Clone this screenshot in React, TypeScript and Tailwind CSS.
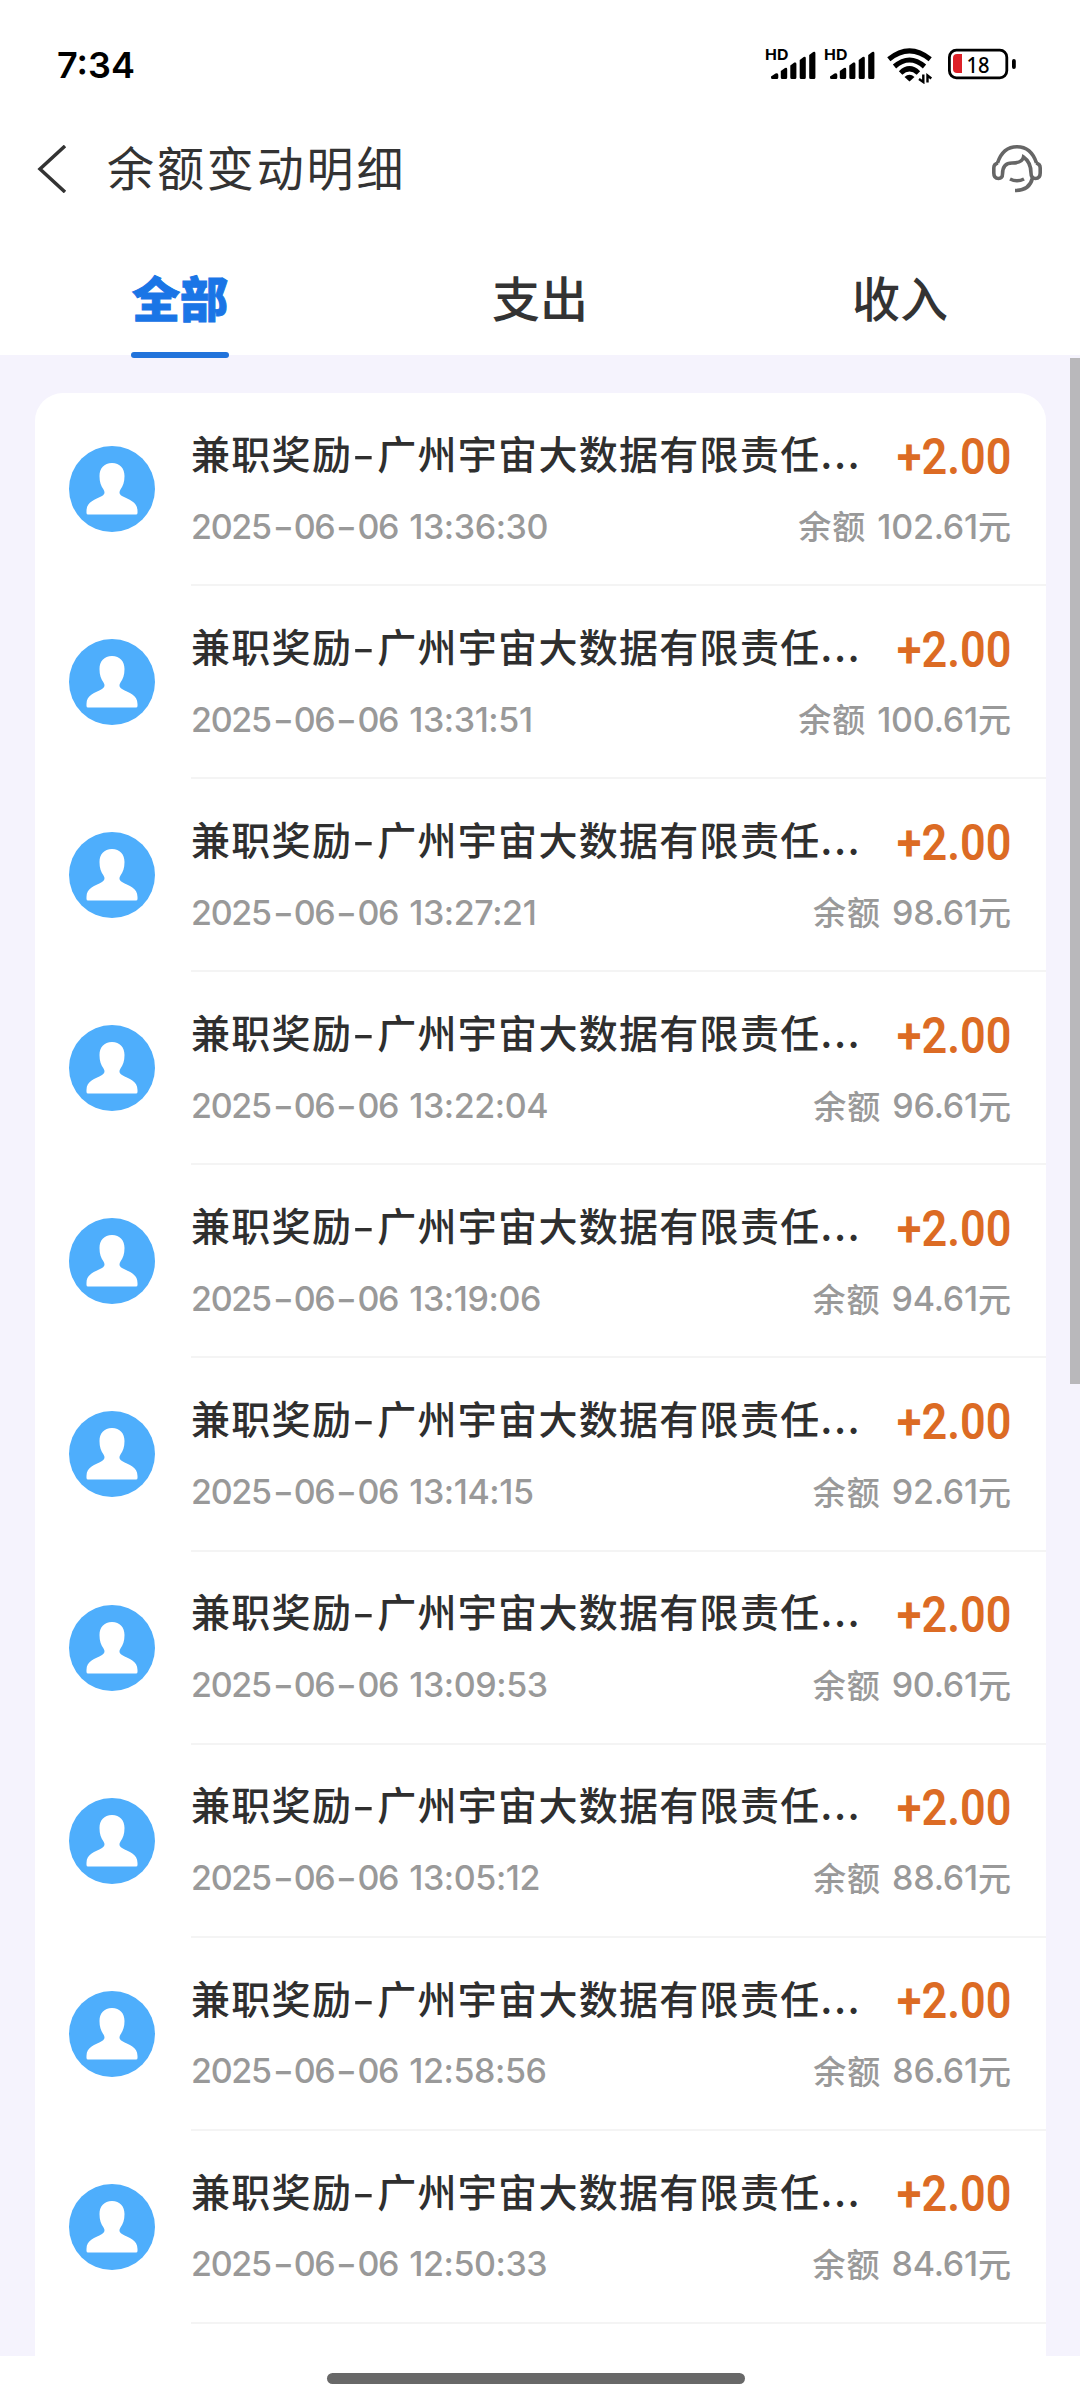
const records = [
  { time: "2025-06-06 13:36:30", balance: "102.61" },
  { time: "2025-06-06 13:31:51", balance: "100.61" },
  { time: "2025-06-06 13:27:21", balance: "98.61" },
  { time: "2025-06-06 13:22:04", balance: "96.61" },
  { time: "2025-06-06 13:19:06", balance: "94.61" },
  { time: "2025-06-06 13:14:15", balance: "92.61" },
  { time: "2025-06-06 13:09:53", balance: "90.61" },
  { time: "2025-06-06 13:05:12", balance: "88.61" },
  { time: "2025-06-06 12:58:56", balance: "86.61" },
  { time: "2025-06-06 12:50:33", balance: "84.61" },
];

const tabs = ["全部", "支出", "收入"];

function Signal() {
  return (
    <div className="relative h-8 w-[50px]">
      <span className="absolute -left-px -top-0.5 origin-left scale-x-[1.06] font-['Inter'] text-[15px] font-bold leading-[18px] text-black">
        HD
      </span>
      <svg className="h-8 w-[50px]" viewBox="0 0 50 32">
        <path d="M5 29.5 V28.5 L9.5 25.5 Q12.3 24.5 12.3 27 V29.5 a1.5 1.5 0 0 1-1.5 1.5 H6.5 A1.5 1.5 0 0 1 5 29.5Z" />
        <path d="M14.8 23 L19 20 Q21.2 19.2 21.2 21.2 V29.5 a1.5 1.5 0 0 1-1.5 1.5 H16.3 a1.5 1.5 0 0 1-1.5-1.5Z" />
        <path d="M24.3 17.5 L28.3 14.6 Q30.4 14 30.4 15.9 V29.5 a1.5 1.5 0 0 1-1.5 1.5 H25.8 a1.5 1.5 0 0 1-1.5-1.5Z" />
        <path d="M33.7 12 L37.7 9 Q39.8 8.3 39.8 10.3 V29.5 a1.5 1.5 0 0 1-1.5 1.5 H35.2 a1.5 1.5 0 0 1-1.5-1.5Z" />
        <path d="M43.2 7 L47.2 4 Q49.4 3.3 49.4 5.3 V29.5 a1.5 1.5 0 0 1-1.5 1.5 H44.7 a1.5 1.5 0 0 1-1.5-1.5Z" />
      </svg>
    </div>
  );
}

function Wifi() {
  return (
    <svg className="h-9 w-[46px]" viewBox="0 0 46 36" fill="none" stroke="#000">
      <path d="M1.8 11.3 Q22.5 -5.500 43.2 11.3" strokeWidth="5" />
      <path d="M7.5 18.5 Q22.5 5.5 37.5 18.5" strokeWidth="5" />
      <path d="M13.6 25 Q22.5 16.5 31.4 25" strokeWidth="5" />
      <path d="M17.5 29 Q22.5 24.5 27.5 29 L22.5 33.5Z" fill="#000" stroke="none" />
      <path d="M36.3 26.5 V34 L32 31 M40.5 34.5 V27.5 L44.3 30.5" strokeWidth="2.4" />
    </svg>
  );
}

function Battery() {
  return (
    <svg className="h-8 w-[70px]" viewBox="0 0 70 32">
      <rect x="1.4" y="2.2" width="57.4" height="27.6" rx="7" fill="#fff" stroke="#000" strokeWidth="2.8" />
      <path d="M9 6 H14 V25 H9 Q5 25 5 21 V10 Q5 6 9 6Z" fill="#dd2027" />
      <text x="18.5" y="24.5" fontFamily="'Noto Sans', sans-serif" fontWeight="500" fontSize="22" textLength="23" lengthAdjust="spacingAndGlyphs">
        18
      </text>
      <rect x="64" y="11" width="3.8" height="10" rx="1.9" />
    </svg>
  );
}

function StatusBar() {
  return (
    <div className="flex h-[130px] items-start justify-between pl-[57px] pr-[62px]">
      <span className="mt-[42px] font-['Inter'] text-[36px] font-semibold leading-[46px] text-black">7:34</span>
      <div className="mt-12 flex items-start">
        <Signal />
        <span className="w-[9px]" />
        <Signal />
        <span className="w-[12px]" />
        <Wifi />
        <span className="w-[15px]" />
        <Battery />
      </div>
    </div>
  );
}

function SupportIcon() {
  return (
    <svg className="h-12 w-[50px]" viewBox="0 0 50 48" fill="none" stroke="#666" strokeWidth="3.6">
      <path d="M5.500 18 C9 7.5 16 1.8 25 1.8 C34 1.8 41 7.5 44.5 18" />
      <path d="M6 18 Q1.8 19 1.8 23 V28 Q1.8 33.5 6.5 33.5 Q10.5 33.5 10.5 29 C10.5 21.5 13.5 18 20 18 C26 18 30.5 17 31.5 12 C36.5 15.5 39 20 39 28 Q39 33.5 43.5 33.5 Q48.2 33.5 48.2 28 V23 Q48.2 19 44 18" />
      <path d="M40.5 33 C38.5 41.500 33 45.5 23 45.5" />
      <path d="M18 34 Q25 37.5 32 34" />
    </svg>
  );
}

function Avatar() {
  return (
    <svg className="size-[86px] shrink-0" viewBox="0 0 86 86">
      <circle cx="43" cy="43" r="43" fill="#4eaefc" />
      <path d="M43 17 C51 17 55.5 22.5 55.5 30 C55.5 36 54 40 51.5 43.5 C50 46 50 48 53 50 C60 54 68.5 55.5 68.5 65 V67 Q68.5 68.5 67 68.5 H19 Q17.5 68.5 17.5 67 V65 C17.5 55.5 26 54 33 50 C36 48 36 46 34.5 43.5 C32 40 30.5 36 30.5 30 C30.5 22.5 35 17 43 17Z" fill="#fff" />
    </svg>
  );
}

function DateText({ value }: { value: string }) {
  const [date, clock] = value.split(" ");

  return (
    <span className="flex font-['Inter'] font-medium">
      <span className="flex tracking-[-1.3px]">
        {date.split(/(-)/).map((part, i) =>
          part === "-" ? (
            <span key={i} className="w-[23px] scale-x-[1.35] text-center">-</span>
          ) : (
            <span key={i}>{part}</span>
          )
        )}
      </span>
      <span className="ml-[11px] tracking-[-0.4px]">{clock}</span>
    </span>
  );
}

function RecordRow({ time, balance }: { time: string; balance: string }) {
  return (
    <div className="flex h-[193.1px] shrink-0 pl-[34px]">
      <div className="pt-[53px]">
        <Avatar />
      </div>
      <div className="ml-9 flex-1 border-b-2 border-[#f4f4f4] pr-[35px] pt-[30px]">
        <div className="flex h-[58px] items-center justify-between">
          <span className="flex text-[39px] font-medium tracking-[1.3px] text-[#2f2f2f]">
            兼职奖励
            <span className="w-[25px] scale-x-[1.6] text-center">-</span>
            广州宇宙大数据有限责任
            <span className="tracking-[2px]">...</span>
          </span>
          <span className="mt-2.5 origin-right scale-x-[0.9] font-['Roboto'] text-[50px] font-semibold text-[#dc6b24]">+2.00</span>
        </div>
        <div className="mt-[21px] flex h-[48px] items-center justify-between text-[34px] text-[#999]">
          <DateText value={time} />
          <span className="flex items-center">
            <span className="text-[33px] font-medium tracking-[1px]">余额</span>
            <span className="ml-[11px] font-['Inter'] font-medium tracking-[-0.2px]">{balance}</span>
            <span className="text-[33px] font-medium">元</span>
          </span>
        </div>
      </div>
    </div>
  );
}

export default function App() {
  return (
    <div className="flex h-[2400px] w-[1080px] flex-col overflow-hidden bg-white font-['Noto_Sans_CJK_SC',sans-serif]">
      <StatusBar />

      {/* Title bar */}
      <div className="flex h-[78px] items-center pl-[37px] pr-[38px]">
        <svg className="h-12 w-[30px]" viewBox="0 0 30 48" fill="none" stroke="#333" strokeWidth="3.5">
          <path d="M28 1 L3 24 L28 47" />
        </svg>
        <h1 className="-mt-1.5 ml-10 flex-1 text-[47px] leading-[60px] tracking-[2.9px] text-[#333]">余额变动明细</h1>
        <SupportIcon />
      </div>

      {/* Tabs */}
      <div className="z-10 flex h-[147px] shrink-0">
        {tabs.map((tab, i) => (
          <div key={tab} className="flex flex-1 flex-col items-center justify-end">
            <span
              className={`text-[48px] leading-[60px] ${
                i === 0 ? "font-black text-[#1a75e6] [-webkit-text-stroke:1px_#1a75e6]" : "font-medium text-[#333]"
              }`}
            >
              {tab}
            </span>
            <span className={`-mb-[3px] mt-[26px] h-1.5 w-[98px] rounded-full ${i === 0 ? "bg-[#2173db]" : ""}`} />
          </div>
        ))}
      </div>

      {/* Records */}
      <div className="flex h-[2001px] shrink-0 overflow-hidden bg-[#f5f3fd]">
        <div className="ml-[35px] mt-[38px] flex w-[1011px] flex-col rounded-t-[28px] bg-white">
          {records.map((r) => (
            <RecordRow key={r.time} {...r} />
          ))}
        </div>
        <div className="ml-auto mt-[3px] h-[1026px] w-2.5 bg-[#b9b8bb]" />
      </div>

      <div className="flex flex-1 items-start justify-center pr-2">
        <div className="mt-[17px] h-[11px] w-[418px] rounded-full bg-[#686868]" />
      </div>
    </div>
  );
}
